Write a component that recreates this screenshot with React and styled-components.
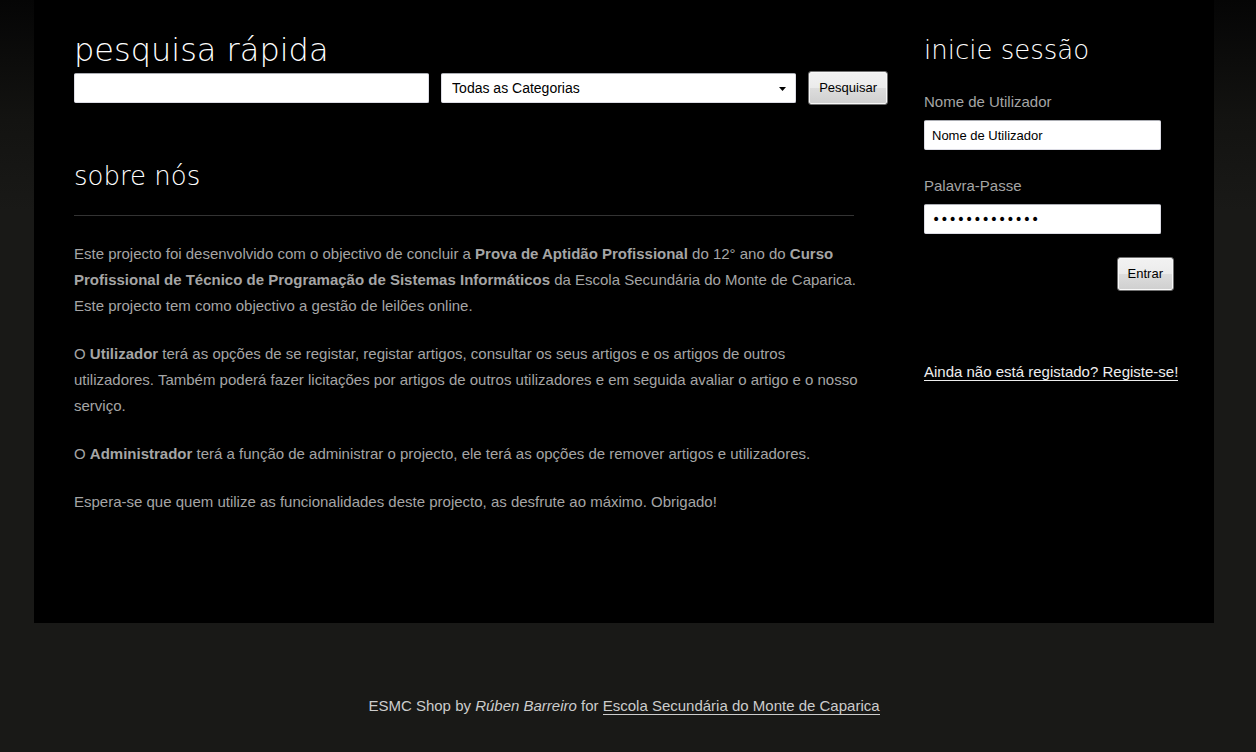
import React from "react";
import styled, { createGlobalStyle } from "styled-components";

const GlobalStyle = createGlobalStyle`
  *, *::before, *::after { box-sizing: border-box; }
  body {
    margin: 0;
    min-height: 100vh;
    padding: 0 8px 0 0;
    background: #191917 linear-gradient(#050505, #131311 120px, #191917) no-repeat 0 0 / 100% 210px;
    color: #a5a5a5;
    font: 15px/26px "Liberation Sans", Arial, sans-serif;
  }
`;

const Panel = styled.div`
  display: grid;
  grid-template-columns: minmax(0, 814px) minmax(0, 250px);
  gap: 36px;
  max-width: 1180px;
  margin: 0 auto;
  padding: 30px 40px 108px;
  background: #000;
`;

const Heading = styled.h2`
  margin: 0;
  color: #fff;
  font-family: "DejaVu Sans", Verdana, sans-serif;
  font-weight: 200;
  font-size: ${(p) => (p.$large ? "32px" : "26px")};
  line-height: 40px;
`;

const SearchForm = styled.form`
  display: grid;
  grid-template-columns: minmax(0, 1fr) minmax(0, 1fr) auto;
  align-items: center;
  gap: 12px;
  margin-top: 1px;
`;

const Field = styled.input`
  display: block;
  width: 100%;
  height: 30px;
  padding: 0 7px;
  border: 1px solid #dcdce4;
  border-top-color: #abadb3;
  border-radius: 2px;
  background: #fff;
  color: #000;
  font: 13px/16px "Liberation Sans", Arial, sans-serif;
`;

const SelectWrap = styled.div`
  position: relative;
`;

const Select = styled(Field)`
  appearance: none;
  padding: 0 10px;
  font-size: 14px;
`;

const Arrow = styled.svg`
  position: absolute;
  top: 14px;
  right: 10px;
  pointer-events: none;
`;

const Button = styled.button`
  height: 34px;
  padding: 0 10px;
  border: 1px solid #707070;
  border-radius: 3px;
  background: linear-gradient(#f2f2f2, #ebebeb 50%, #dddddd 50%, #cfcfcf) padding-box;
  box-shadow: inset 0 0 0 1px #f8f8f8;
  color: #000;
  font: 13px/16px "Liberation Sans", Arial, sans-serif;
`;

const About = styled.section`
  margin-top: 51px;
`;

const AboutHeader = styled.header`
  max-width: 780px;
  padding-bottom: 19px;
  border-bottom: 1px solid #333;
`;

const Text = styled.div`
  max-width: 790px;
  margin-top: 25px;

  p { margin: 0 0 22px; }
  p:last-child { margin: 0; }
`;

const LoginForm = styled.form`
  display: flex;
  flex-direction: column;
  margin-top: 19px;
`;

const Label = styled.label`
  margin-bottom: 5px;
`;

const LoginField = styled(Field)`
  max-width: 237px;
  margin-bottom: 23px;
`;

const PasswordField = styled(LoginField)`
  font-family: "DejaVu Sans", sans-serif;
  font-size: 14px;
`;

const LoginActions = styled.div`
  display: flex;
  justify-content: flex-end;
`;

const Link = styled.a`
  color: inherit;
  text-decoration: none;
  border-bottom: 1px solid;
`;

const Register = styled.p`
  margin: 68px 0 0;
  color: #eee;
  white-space: nowrap;
`;

const Footer = styled.footer`
  padding: 70px 0 33px;
  color: #ccc;
  text-align: center;
`;

export default function App() {
  return (
    <>
      <GlobalStyle />
      <Panel>
        <main>
          <Heading as="h1" $large>pesquisa rápida</Heading>
          <SearchForm>
            <Field type="text" aria-label="Pesquisa" />
            <SelectWrap>
              <Select as="select" aria-label="Categoria">
                <option>Todas as Categorias</option>
              </Select>
              <Arrow width="7" height="4" viewBox="0 0 7 4" aria-hidden="true">
                <path d="M0 0h7L3.5 4z" fill="#000" />
              </Arrow>
            </SelectWrap>
            <Button type="button">Pesquisar</Button>
          </SearchForm>
          <About>
            <AboutHeader>
              <Heading>sobre nós</Heading>
            </AboutHeader>
            <Text>
              <p>
                Este projecto foi desenvolvido com o objectivo de concluir a{" "}
                <strong>Prova de Aptidão Profissional</strong> do 12° ano do{" "}
                <strong>Curso Profissional de Técnico de Programação de Sistemas Informáticos</strong>{" "}
                da Escola Secundária do Monte de Caparica. Este projecto tem como objectivo a gestão
                de leilões online.
              </p>
              <p>
                O <strong>Utilizador</strong> terá as opções de se registar, registar artigos,
                consultar os seus artigos e os artigos de outros utilizadores. Também poderá fazer
                licitações por artigos de outros utilizadores e em seguida avaliar o artigo e o
                nosso serviço.
              </p>
              <p>
                O <strong>Administrador</strong> terá a função de administrar o projecto, ele terá
                as opções de remover artigos e utilizadores.
              </p>
              <p>
                Espera-se que quem utilize as funcionalidades deste projecto, as desfrute ao máximo.
                Obrigado!
              </p>
            </Text>
          </About>
        </main>
        <aside>
          <Heading>inicie sessão</Heading>
          <LoginForm>
            <Label htmlFor="user">Nome de Utilizador</Label>
            <LoginField id="user" type="text" defaultValue="Nome de Utilizador" />
            <Label htmlFor="pass">Palavra-Passe</Label>
            <PasswordField id="pass" type="password" defaultValue="palavra-passe" />
            <LoginActions>
              <Button type="button">Entrar</Button>
            </LoginActions>
          </LoginForm>
          <Register>
            <Link href="#registo">Ainda não está registado? Registe-se!</Link>
          </Register>
        </aside>
      </Panel>
      <Footer>
        ESMC Shop by <em>Rúben Barreiro</em> for{" "}
        <Link href="#escola">Escola Secundária do Monte de Caparica</Link>
      </Footer>
    </>
  );
}
